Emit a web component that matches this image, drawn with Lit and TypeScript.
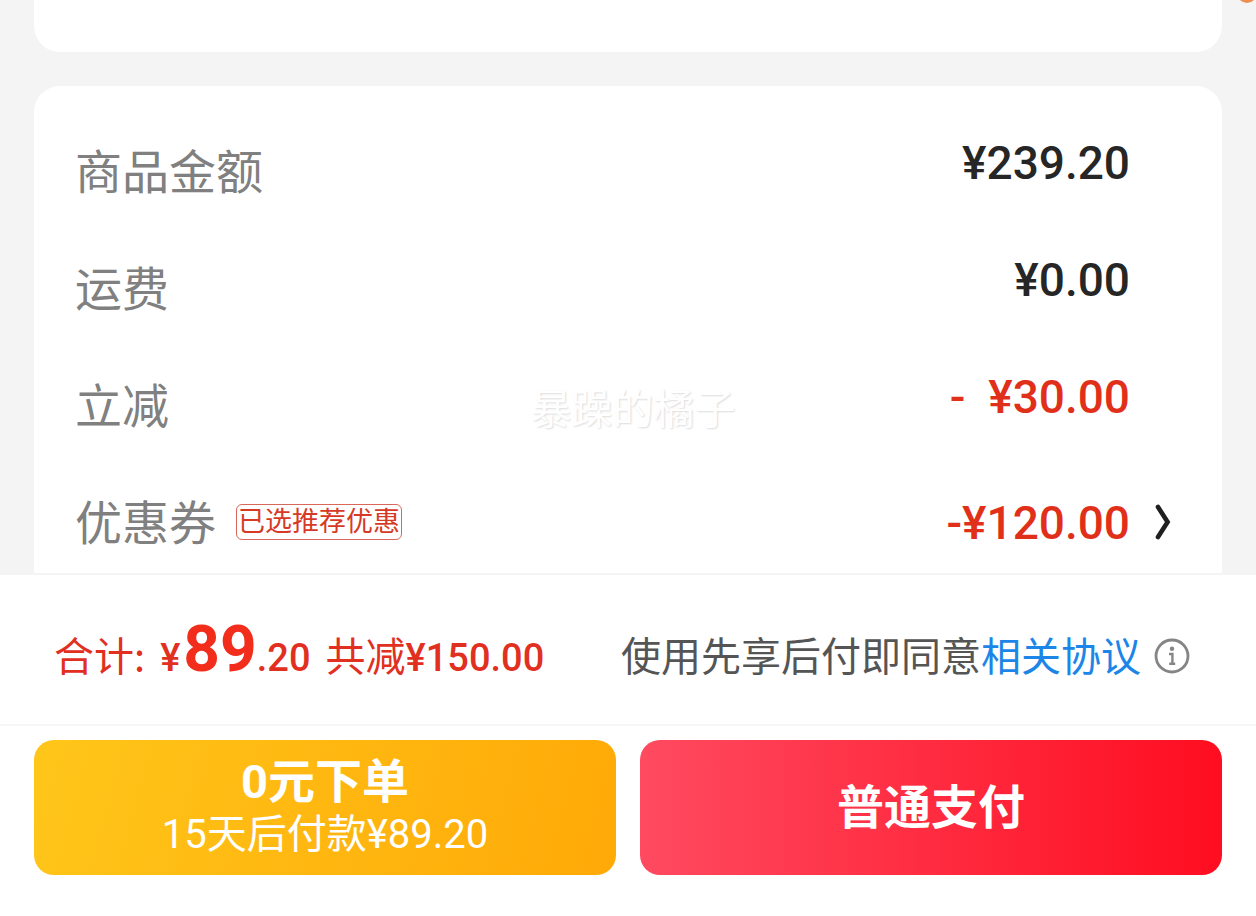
import { LitElement, html, css, svg } from "lit";
import { customElement } from "lit/decorators.js";
import { classMap } from "lit/directives/class-map.js";

interface PriceRow {
  label: string;
  value: string;
  discount?: boolean;
}

const ROWS: PriceRow[] = [
  { label: "商品金额", value: "¥239.20" },
  { label: "运费", value: "¥0.00" },
  { label: "立减", value: "-\u00a0\u00a0¥30.00", discount: true },
];

const chevron = svg`<svg class="chevron" viewBox="0 0 16 36" aria-hidden="true">
  <path d="M3 3L12.6 18L3 33" fill="none" stroke="#1f1f1f" stroke-width="4.6" stroke-linecap="round" stroke-linejoin="miter"></path>
</svg>`;

const infoIcon = svg`<svg class="info-icon" viewBox="0 0 36 36" aria-hidden="true">
  <circle cx="18" cy="18" r="16" fill="none" stroke="#858585" stroke-width="2.8"></circle>
  <circle cx="18" cy="10.8" r="2.2" fill="#858585"></circle>
  <path d="M15 16h3.4v9.6M15.2 25.8h6" fill="none" stroke="#858585" stroke-width="2.4"></path>
</svg>`;

@customElement("app-root")
export class AppRoot extends LitElement {
  static styles = css`
    :host {
      display: flex;
      flex-direction: column;
      height: 100vh;
      overflow: hidden;
      position: relative;
      background: #f4f4f4;
      font-family: "Noto Sans CJK SC", sans-serif;
    }
    .content {
      flex: 1;
      min-height: 0;
      overflow: hidden;
      display: flex;
      flex-direction: column;
      gap: 34px;
      padding: 0 34px;
    }
    .card {
      background: #fff;
      border-radius: 26px;
      flex: none;
    }
    .card.previous {
      height: 52px;
      border-radius: 0 0 26px 26px;
    }
    .card.prices {
      position: relative;
      padding: 49px 92px 49px 41px;
    }
    .list {
      margin: 0;
      display: flex;
      flex-direction: column;
      gap: 50px;
    }
    .row {
      display: flex;
      justify-content: space-between;
      align-items: flex-start;
      position: relative;
    }
    .row.center {
      align-items: center;
    }
    .row.center .value {
      padding-top: 8px;
    }
    .label {
      display: flex;
      align-items: center;
      gap: 20px;
      font-size: 47px;
      line-height: 67px;
      color: #808080;
    }
    .value {
      margin: 0;
      font-family: Roboto, "Noto Sans CJK SC", sans-serif;
      font-weight: 500;
      font-size: 46px;
      line-height: 57px;
      color: #262626;
    }
    .discount {
      color: #e1301a;
    }
    .tag {
      margin-top: 4px;
      border: 1px solid #d9685a;
      border-radius: 6px;
      padding: 0 1px 4px;
      font-size: 27px;
      line-height: 30px;
      color: #d63a26;
    }
    .more {
      position: absolute;
      right: -50px;
      top: 4px;
      bottom: 0;
      width: 34px;
      padding: 0;
      border: 0;
      background: none;
      display: flex;
      align-items: center;
      justify-content: center;
      cursor: pointer;
    }
    .chevron {
      width: 16px;
      height: 36px;
    }
    .watermark {
      position: absolute;
      inset: 0 0 0 10px;
      padding-top: 290px;
      text-align: center;
      font-size: 41px;
      line-height: 60px;
      color: #fff;
      text-shadow: 1px 1px 2px rgba(0, 0, 0, 0.14);
      pointer-events: none;
    }
    .dot {
      position: absolute;
      top: -17px;
      right: -1px;
      width: 20px;
      height: 20px;
      border-radius: 50%;
      background: #ee8f50;
    }
    .footer {
      flex: none;
      background: #fff;
      border-top: 2px solid #f4f4f4;
    }
    .summary {
      box-sizing: border-box;
      display: flex;
      justify-content: space-between;
      align-items: center;
      height: 151px;
      padding: 12px 66px 0 54px;
      border-bottom: 2px solid #f6f6f6;
      white-space: nowrap;
    }
    .total {
      display: flex;
      align-items: baseline;
      gap: 15px;
      padding-bottom: 3px;
      font-size: 40px;
      line-height: 60px;
      color: #e1301f;
    }
    .amount {
      font-family: Roboto, "Noto Sans CJK SC", sans-serif;
      font-weight: 500;
      font-size: 38px;
    }
    .big {
      margin-left: 3px;
      font-weight: 700;
      font-size: 64px;
      color: #f22d1c;
    }
    .agreement {
      display: flex;
      align-items: center;
      gap: 13px;
      font-size: 40px;
      line-height: 60px;
      color: #555;
    }
    .terms {
      padding-bottom: 4px;
    }
    .agreement a {
      color: #1c86e8;
      text-decoration: none;
    }
    .info {
      padding: 0;
      border: 0;
      background: none;
      display: flex;
      cursor: pointer;
    }
    .info-icon {
      width: 36px;
      height: 36px;
    }
    .actions {
      display: grid;
      grid-template-columns: 1fr 1fr;
      gap: 24px;
      padding: 14px 34px 41px;
    }
    .action {
      height: 135px;
      border: 0;
      border-radius: 20px;
      padding: 0;
      display: flex;
      flex-direction: column;
      align-items: center;
      justify-content: center;
      font-family: Roboto, "Noto Sans CJK SC", sans-serif;
      color: #fff;
      cursor: pointer;
      font-size: 47px;
      font-weight: 700;
      line-height: 54px;
    }
    .later {
      background: linear-gradient(105deg, #ffc61a, #ffa907);
    }
    .now {
      background: linear-gradient(90deg, #ff4a60, #ff0d20);
    }
    .sub {
      font-size: 40px;
      font-weight: 400;
      line-height: 52px;
    }
  `;

  private renderRow(row: PriceRow) {
    return html`<div class="row">
      <dt class="label">${row.label}</dt>
      <dd class=${classMap({ value: true, discount: !!row.discount })}>${row.value}</dd>
    </div>`;
  }

  render() {
    return html`
      <main class="content">
        <section class="card previous"></section>
        <section class="card prices">
          <dl class="list">
            ${ROWS.map((row) => this.renderRow(row))}
            <div class="row center">
              <dt class="label">优惠券<span class="tag">已选推荐优惠</span></dt>
              <dd class="value discount">
                -¥120.00<button class="more" type="button" aria-label="优惠券">${chevron}</button>
              </dd>
            </div>
          </dl>
          <div class="watermark">暴躁的橘子</div>
        </section>
      </main>
      <footer class="footer">
        <div class="summary">
          <div class="total">
            <span>合计:</span>
            <span class="amount">¥<span class="big">89</span>.20</span>
            <span>共减<span class="amount">¥150.00</span></span>
          </div>
          <div class="agreement">
            <span class="terms">使用先享后付即同意<a href="#">相关协议</a></span>
            <button class="info" type="button" aria-label="相关协议">${infoIcon}</button>
          </div>
        </div>
        <div class="actions">
          <button class="action later" type="button">
            <span>0元下单</span>
            <span class="sub">15天后付款¥89.20</span>
          </button>
          <button class="action now" type="button">普通支付</button>
        </div>
      </footer>
      <span class="dot"></span>
    `;
  }
}
